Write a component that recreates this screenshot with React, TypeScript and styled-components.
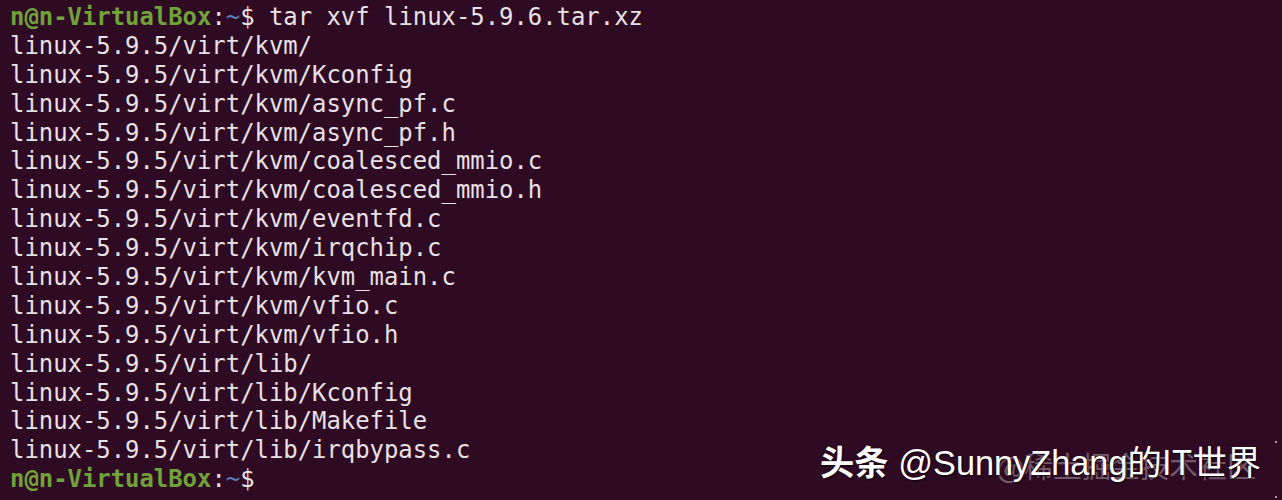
import React from "react";
import styled, { createGlobalStyle } from "styled-components";

const Global = createGlobalStyle`
  html, body {
    margin: 0;
    padding: 0;
    background: #2f0a23;
  }
`;

const Screen = styled.div`
  position: relative;
  width: 1282px;
  height: 500px;
  overflow: hidden;
  background: #2f0a23;
`;

const Terminal = styled.div`
  display: flex;
  flex-direction: column;
  padding: 3px 0 0 10px;
  font-family: "DejaVu Sans Mono", "Liberation Mono", monospace;
  font-size: 23.9px;
  line-height: 28.9px;
  color: #e8e1e5;
  white-space: pre;
`;

const Line = styled.div`
  height: 28.9px;
`;

const User = styled.span`
  color: #6fa23a;
  font-weight: bold;
`;

const Path = styled.span`
  color: #5c7fbf;
`;

const Stamp = styled.div`
  position: absolute;
  right: 21px;
  bottom: 14px;
`;

const Watermark = styled.div`
  position: relative;
  font-family: "Liberation Sans", "Noto Sans CJK SC", sans-serif;
  font-size: 34.3px;
  line-height: 46px;
  color: #ffffff;
  white-space: nowrap;
  text-shadow: 1px 1px 2px rgba(0, 0, 0, 0.8);
`;

const Brand = styled.span`
  font-family: "Noto Sans CJK SC", sans-serif;
  font-weight: bold;
`;

const Cjk = styled.span`
  font-family: "Noto Sans CJK SC", sans-serif;
`;

const Overlay = styled.div`
  position: absolute;
  right: 5px;
  top: 9px;
  font-family: "Noto Sans CJK SC", sans-serif;
  font-size: 29px;
  line-height: 38px;
  color: rgba(200, 190, 198, 0.45);
  white-space: nowrap;
`;

const Dot = styled.div<{ $top: number }>`
  position: absolute;
  left: 1275px;
  top: ${(p) => p.$top}px;
  width: 2px;
  height: 2px;
  background: #d9c9d4;
  border-radius: 1px;
`;

const files = [
  "linux-5.9.5/virt/kvm/",
  "linux-5.9.5/virt/kvm/Kconfig",
  "linux-5.9.5/virt/kvm/async_pf.c",
  "linux-5.9.5/virt/kvm/async_pf.h",
  "linux-5.9.5/virt/kvm/coalesced_mmio.c",
  "linux-5.9.5/virt/kvm/coalesced_mmio.h",
  "linux-5.9.5/virt/kvm/eventfd.c",
  "linux-5.9.5/virt/kvm/irqchip.c",
  "linux-5.9.5/virt/kvm/kvm_main.c",
  "linux-5.9.5/virt/kvm/vfio.c",
  "linux-5.9.5/virt/kvm/vfio.h",
  "linux-5.9.5/virt/lib/",
  "linux-5.9.5/virt/lib/Kconfig",
  "linux-5.9.5/virt/lib/Makefile",
  "linux-5.9.5/virt/lib/irqbypass.c",
];

const Prompt: React.FC<{ cmd?: string }> = ({ cmd }) => (
  <Line>
    <User>n@n-VirtualBox</User>:<Path>~</Path>$ {cmd ?? ""}
  </Line>
);

export default function App() {
  return (
    <>
      <Global />
      <Screen>
        <Terminal>
          <Prompt cmd="tar xvf linux-5.9.6.tar.xz" />
          {files.map((f) => (
            <Line key={f}>{f}</Line>
          ))}
          <Prompt />
        </Terminal>
        <Stamp>
          <Overlay>@稀土掘金技术社区</Overlay>
          <Watermark>
            <Brand>头条</Brand> @SunnyZhang<Cjk>的IT世界</Cjk>
          </Watermark>
        </Stamp>
        <Dot $top={441} />
        <Dot $top={496} />
      </Screen>
    </>
  );
}
